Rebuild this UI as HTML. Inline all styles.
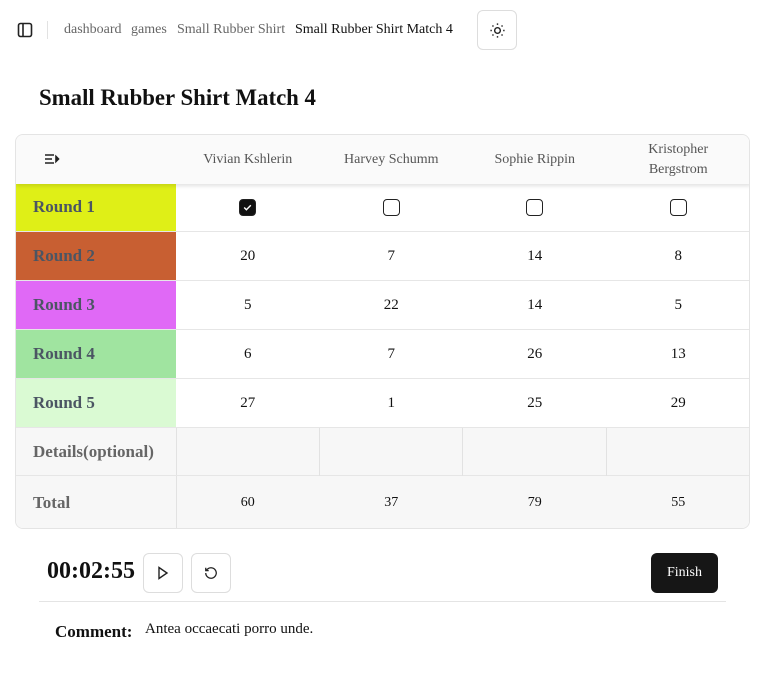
<!DOCTYPE html>
<html><head><style>
*{box-sizing:border-box;margin:0;padding:0}
body{width:763px;height:683px;background:#fff;font-family:"Liberation Serif",serif;color:#111;position:relative;overflow:hidden}
.abs{position:absolute}
.bc{top:22px;font-size:14px;color:#666}
.tbl{left:15px;top:134px;width:735px;height:395px;border:1px solid #e4e4e4;border-radius:8px;overflow:hidden;background:#fff}
.hdr{position:absolute;left:0;top:0;width:735px;height:49px;background:#fafafa;box-shadow:0 2px 4px rgba(0,0,0,.12);z-index:2}
.row{position:absolute;left:0;width:735px;border-bottom:1px solid #e6e6e6}
.lab{position:absolute;left:0;top:0;width:160px;height:100%;font-weight:bold;font-size:17px;color:#4b5563;padding-left:17px;display:flex;align-items:center}
.c{position:absolute;top:0;height:100%;width:143.5px;display:flex;align-items:center;justify-content:center;font-size:15px}
.h{font-size:14px;color:#555;text-align:center;line-height:20px}
.cb{width:17px;height:17px;border:1.5px solid #222;border-radius:4px}
.btn{border:1px solid #ddd;border-radius:6px;width:40px;height:40px;display:flex;align-items:center;justify-content:center}
</style></head><body>
<svg class="abs" style="left:17px;top:22px" width="16" height="16" viewBox="0 0 16 16" fill="none" stroke="#222" stroke-width="1.6"><rect x="1.5" y="1.5" width="13" height="13" rx="2"/><line x1="6" y1="2" x2="6" y2="14"/></svg>
<div class="abs" style="left:47px;top:21px;width:1px;height:18px;background:#e2e2e2"></div>
<div class="abs bc" style="left:64px">dashboard</div>
<div class="abs bc" style="left:131px">games</div>
<div class="abs bc" style="left:177px">Small Rubber Shirt</div>
<div class="abs bc" style="left:295px;color:#111">Small Rubber Shirt Match 4</div>
<div class="abs btn" style="left:477px;top:10px;width:40px;height:40px"><svg width="17" height="17" viewBox="0 0 24 24" fill="none" stroke="#222" stroke-width="2"><circle cx="12" cy="12" r="4"/><path d="M12 2v2M12 20v2M4.9 4.9l1.4 1.4M17.7 17.7l1.4 1.4M2 12h2M20 12h2M4.9 19.1l1.4-1.4M17.7 6.3l1.4-1.4"/></svg></div>
<div class="abs" style="left:39px;top:85px;font-size:22.8px;font-weight:bold">Small Rubber Shirt Match 4</div>
<div class="abs tbl">
 <div class="hdr">
  <svg class="abs" style="left:28px;top:17px" width="16" height="14" viewBox="0 0 16 14" fill="none" stroke="#222" stroke-width="1.6"><path d="M1 3h9M1 7h7M1 11h9"/><path d="M12 4.5l2.5 2.5L12 9.5z" fill="#222"/></svg>
  <div class="c h" style="left:160px">Vivian Kshlerin</div>
  <div class="c h" style="left:303.5px">Harvey Schumm</div>
  <div class="c h" style="left:447px">Sophie Rippin</div>
  <div class="c h" style="left:590.5px">Kristopher<br>Bergstrom</div>
 </div>
 <div class="row" style="top:48px;height:49px"><div class="lab" style="background:#dfef17">Round 1</div>
  <div class="c" style="left:160px"><div class="cb" style="background:#111;display:flex;align-items:center;justify-content:center"><svg width="11" height="11" viewBox="0 0 10 10"><path d="M2 5l2 2 4-4" stroke="#fff" stroke-width="1.3" fill="none"/></svg></div></div>
  <div class="c" style="left:303.5px"><div class="cb"></div></div><div class="c" style="left:447px"><div class="cb"></div></div><div class="c" style="left:590.5px"><div class="cb"></div></div></div>
 <div class="row" style="top:97px;height:49px"><div class="lab" style="background:#c85f32">Round 2</div><div class="c" style="left:160px">20</div><div class="c" style="left:303.5px">7</div><div class="c" style="left:447px">14</div><div class="c" style="left:590.5px">8</div></div>
 <div class="row" style="top:146px;height:49px"><div class="lab" style="background:#e069f6">Round 3</div><div class="c" style="left:160px">5</div><div class="c" style="left:303.5px">22</div><div class="c" style="left:447px">14</div><div class="c" style="left:590.5px">5</div></div>
 <div class="row" style="top:195px;height:49px"><div class="lab" style="background:#a0e4a0">Round 4</div><div class="c" style="left:160px">6</div><div class="c" style="left:303.5px">7</div><div class="c" style="left:447px">26</div><div class="c" style="left:590.5px">13</div></div>
 <div class="row" style="top:244px;height:49px"><div class="lab" style="background:#dafad3">Round 5</div><div class="c" style="left:160px">27</div><div class="c" style="left:303.5px">1</div><div class="c" style="left:447px">25</div><div class="c" style="left:590.5px">29</div></div>
 <div class="abs" style="left:0;top:293px;width:735px;height:102px;background:#f7f7f7"></div>
 <div class="abs" style="left:160px;top:293px;width:1px;height:102px;background:#e2e2e2"></div>
 <div class="row" style="top:293px;height:48px"><div class="lab" style="color:#666">Details(optional)</div>
  <div class="abs" style="left:303px;top:0;width:1px;height:48px;background:#e2e2e2"></div><div class="abs" style="left:446px;top:0;width:1px;height:48px;background:#e2e2e2"></div><div class="abs" style="left:590px;top:0;width:1px;height:48px;background:#e2e2e2"></div><div class="abs" style="left:733px;top:0;width:1px;height:48px;background:#e2e2e2"></div></div>
 <div class="row" style="top:341px;height:53px;border:none"><div class="lab" style="color:#666">Total</div><div class="c" style="left:160px;font-size:14px">60</div><div class="c" style="left:303.5px;font-size:14px">37</div><div class="c" style="left:447px;font-size:14px">79</div><div class="c" style="left:590.5px;font-size:14px">55</div></div>
</div>
<div class="abs" style="left:47px;top:558px;font-size:24px;font-weight:bold">00:02:55</div>
<div class="abs btn" style="left:143px;top:553px"><svg width="12" height="14" viewBox="0 0 12 14" fill="none" stroke="#222" stroke-width="1.4"><path d="M2 1.5l8 5.5-8 5.5z"/></svg></div>
<div class="abs btn" style="left:191px;top:553px"><svg width="14" height="14" viewBox="0 0 24 24" fill="none" stroke="#222" stroke-width="2.2"><path d="M3 12a9 9 0 1 0 3-6.7L3 8"/><path d="M3 3v5h5"/></svg></div>
<div class="abs" style="left:651px;top:553px;width:67px;height:40px;background:#161616;border-radius:6px;color:#fff;font-size:14px;display:flex;align-items:center;justify-content:center">Finish</div>
<div class="abs" style="left:39px;top:601px;width:687px;height:1px;background:#e4e4e4"></div>
<div class="abs" style="left:55px;top:622px;font-size:17px;font-weight:bold">Comment:</div>
<div class="abs" style="left:145px;top:621px;font-size:15px">Antea occaecati porro unde.</div>
</body></html>
